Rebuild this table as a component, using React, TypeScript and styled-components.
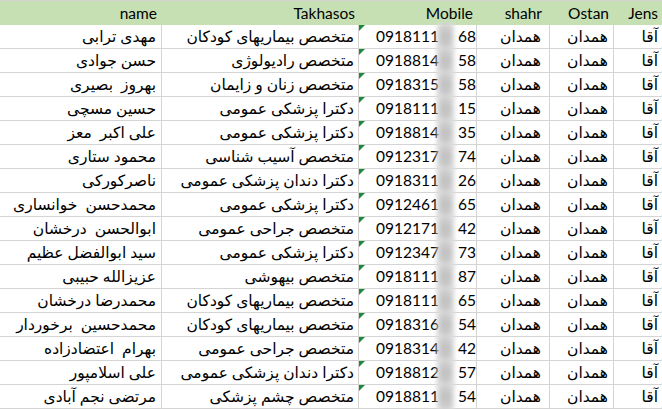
import React from "react";
import styled, { createGlobalStyle } from "styled-components";

const Global = createGlobalStyle`
  html, body { margin: 0; padding: 0; background: #ffffff; }
  body { font-family: "Lato", "DejaVu Sans", sans-serif; color: #000; overflow: hidden; }
`;

const COLS = "162px 197px 118px 73px 64px 1fr";

const Sheet = styled.div`
  width: 662px;
  height: 409px;
  overflow: hidden;
  display: flex;
  flex-direction: column;
`;

const HeaderRow = styled.div`
  display: grid;
  grid-template-columns: ${COLS};
  height: 25px;
  box-sizing: border-box;
  border-top: 1px solid #d4d4d4;
  background: #c6e0b4;
  flex-shrink: 0;
`;

const HeadCell = styled.div<{ $pr: number }>`
  display: flex;
  align-items: flex-end;
  justify-content: flex-end;
  padding: 0 ${(p) => p.$pr}px 2px 0;
  font-size: 15.5px;
  line-height: 19px;
  white-space: nowrap;
  overflow: hidden;
`;

const Row = styled.div`
  display: grid;
  grid-template-columns: ${COLS};
  height: 24px;
  flex-shrink: 0;
`;

const Cell = styled.div<{ $pr?: number }>`
  box-sizing: border-box;
  border-right: 1px solid #d4d4d4;
  border-bottom: 1px solid #d4d4d4;
  display: flex;
  align-items: flex-end;
  justify-content: flex-start;
  direction: rtl;
  padding: 0 ${(p) => p.$pr ?? 4}px 2px 0;
  font-size: 15.5px;
  line-height: 19px;
  white-space: pre;
  overflow: hidden;
  &:last-child { border-right: none; }
`;

const MobileCell = styled.div`
  position: relative;
  box-sizing: border-box;
  border-right: 1px solid #d4d4d4;
  border-bottom: 1px solid #d4d4d4;
  display: flex;
  align-items: flex-end;
  padding: 0 0 2px 17px;
  font-size: 15.5px;
  line-height: 19px;
  white-space: nowrap;
`;

const Flag = styled.span`
  position: absolute;
  left: 0;
  top: 0;
  width: 0;
  height: 0;
  border-top: 6px solid #1e8a3a;
  border-right: 6px solid transparent;
`;

const Blur = styled.span`
  position: absolute;
  left: 78px;
  top: -2px;
  width: 17px;
  height: 28px;
  background: radial-gradient(ellipse at center, #bcbcbc 0%, #cfcfcf 55%, #e6e6e6 100%);
  filter: blur(2px);
`;

const Digits = styled.span<{ $gap?: boolean }>`
  display: inline-block;
  margin-left: ${(p) => (p.$gap ? "19px" : "0")};
`;

type Rec = [string, string, string, string];

const data: Rec[] = [
  ["مهدی ترابی", "متخصص بیماریهای کودکان", "0918111", "68"],
  ["حسن جوادی", "متخصص رادیولوژی", "0918814", "58"],
  ["بهروز  بصیری", "متخصص زنان و زایمان", "0918315", "58"],
  ["حسین مسچی", "دکترا پزشکی عمومی", "0918111", "15"],
  ["علی اکبر  معز", "دکترا پزشکی عمومی", "0918814", "35"],
  ["محمود ستاری", "متخصص آسیب شناسی", "0912317", "74"],
  ["ناصرکورکی", "دکترا دندان پزشکی عمومی", "0918311", "26"],
  ["محمدحسن  خوانساری", "دکترا پزشکی عمومی", "0912461", "65"],
  ["ابوالحسن  درخشان", "متخصص جراحی عمومی", "0912171", "42"],
  ["سید ابوالفضل عظیم", "دکترا پزشکی عمومی", "0912347", "73"],
  ["عزیزالله حبیبی", "متخصص بیهوشی", "0918111", "87"],
  ["محمدرضا درخشان", "متخصص بیماریهای کودکان", "0918111", "65"],
  ["محمدحسین  برخوردار", "متخصص بیماریهای کودکان", "0918316", "54"],
  ["بهرام  اعتضادزاده", "متخصص جراحی عمومی", "0918314", "42"],
  ["علی اسلامپور", "دکترا دندان پزشکی عمومی", "0918812", "57"],
  ["مرتضی نجم آبادی", "متخصص چشم پزشکی", "0918811", "54"],
];

export default function App() {
  return (
    <>
      <Global />
      <Sheet>
        <HeaderRow>
          <HeadCell $pr={5}>name</HeadCell>
          <HeadCell $pr={4}>Takhasos</HeadCell>
          <HeadCell $pr={4}>Mobile</HeadCell>
          <HeadCell $pr={8}>shahr</HeadCell>
          <HeadCell $pr={5}>Ostan</HeadCell>
          <HeadCell $pr={4}>Jens</HeadCell>
        </HeaderRow>
        {data.map(([name, takh, pre, post], i) => (
          <Row key={i}>
            <Cell $pr={5}>{name}</Cell>
            <Cell $pr={4}>{takh}</Cell>
            <MobileCell>
              <Flag />
              <Digits>{pre}</Digits>
              <Blur />
              <Digits $gap>{post}</Digits>
            </MobileCell>
            <Cell $pr={8}>همدان</Cell>
            <Cell $pr={5}>همدان</Cell>
            <Cell $pr={4}>آقا</Cell>
          </Row>
        ))}
      </Sheet>
    </>
  );
}
